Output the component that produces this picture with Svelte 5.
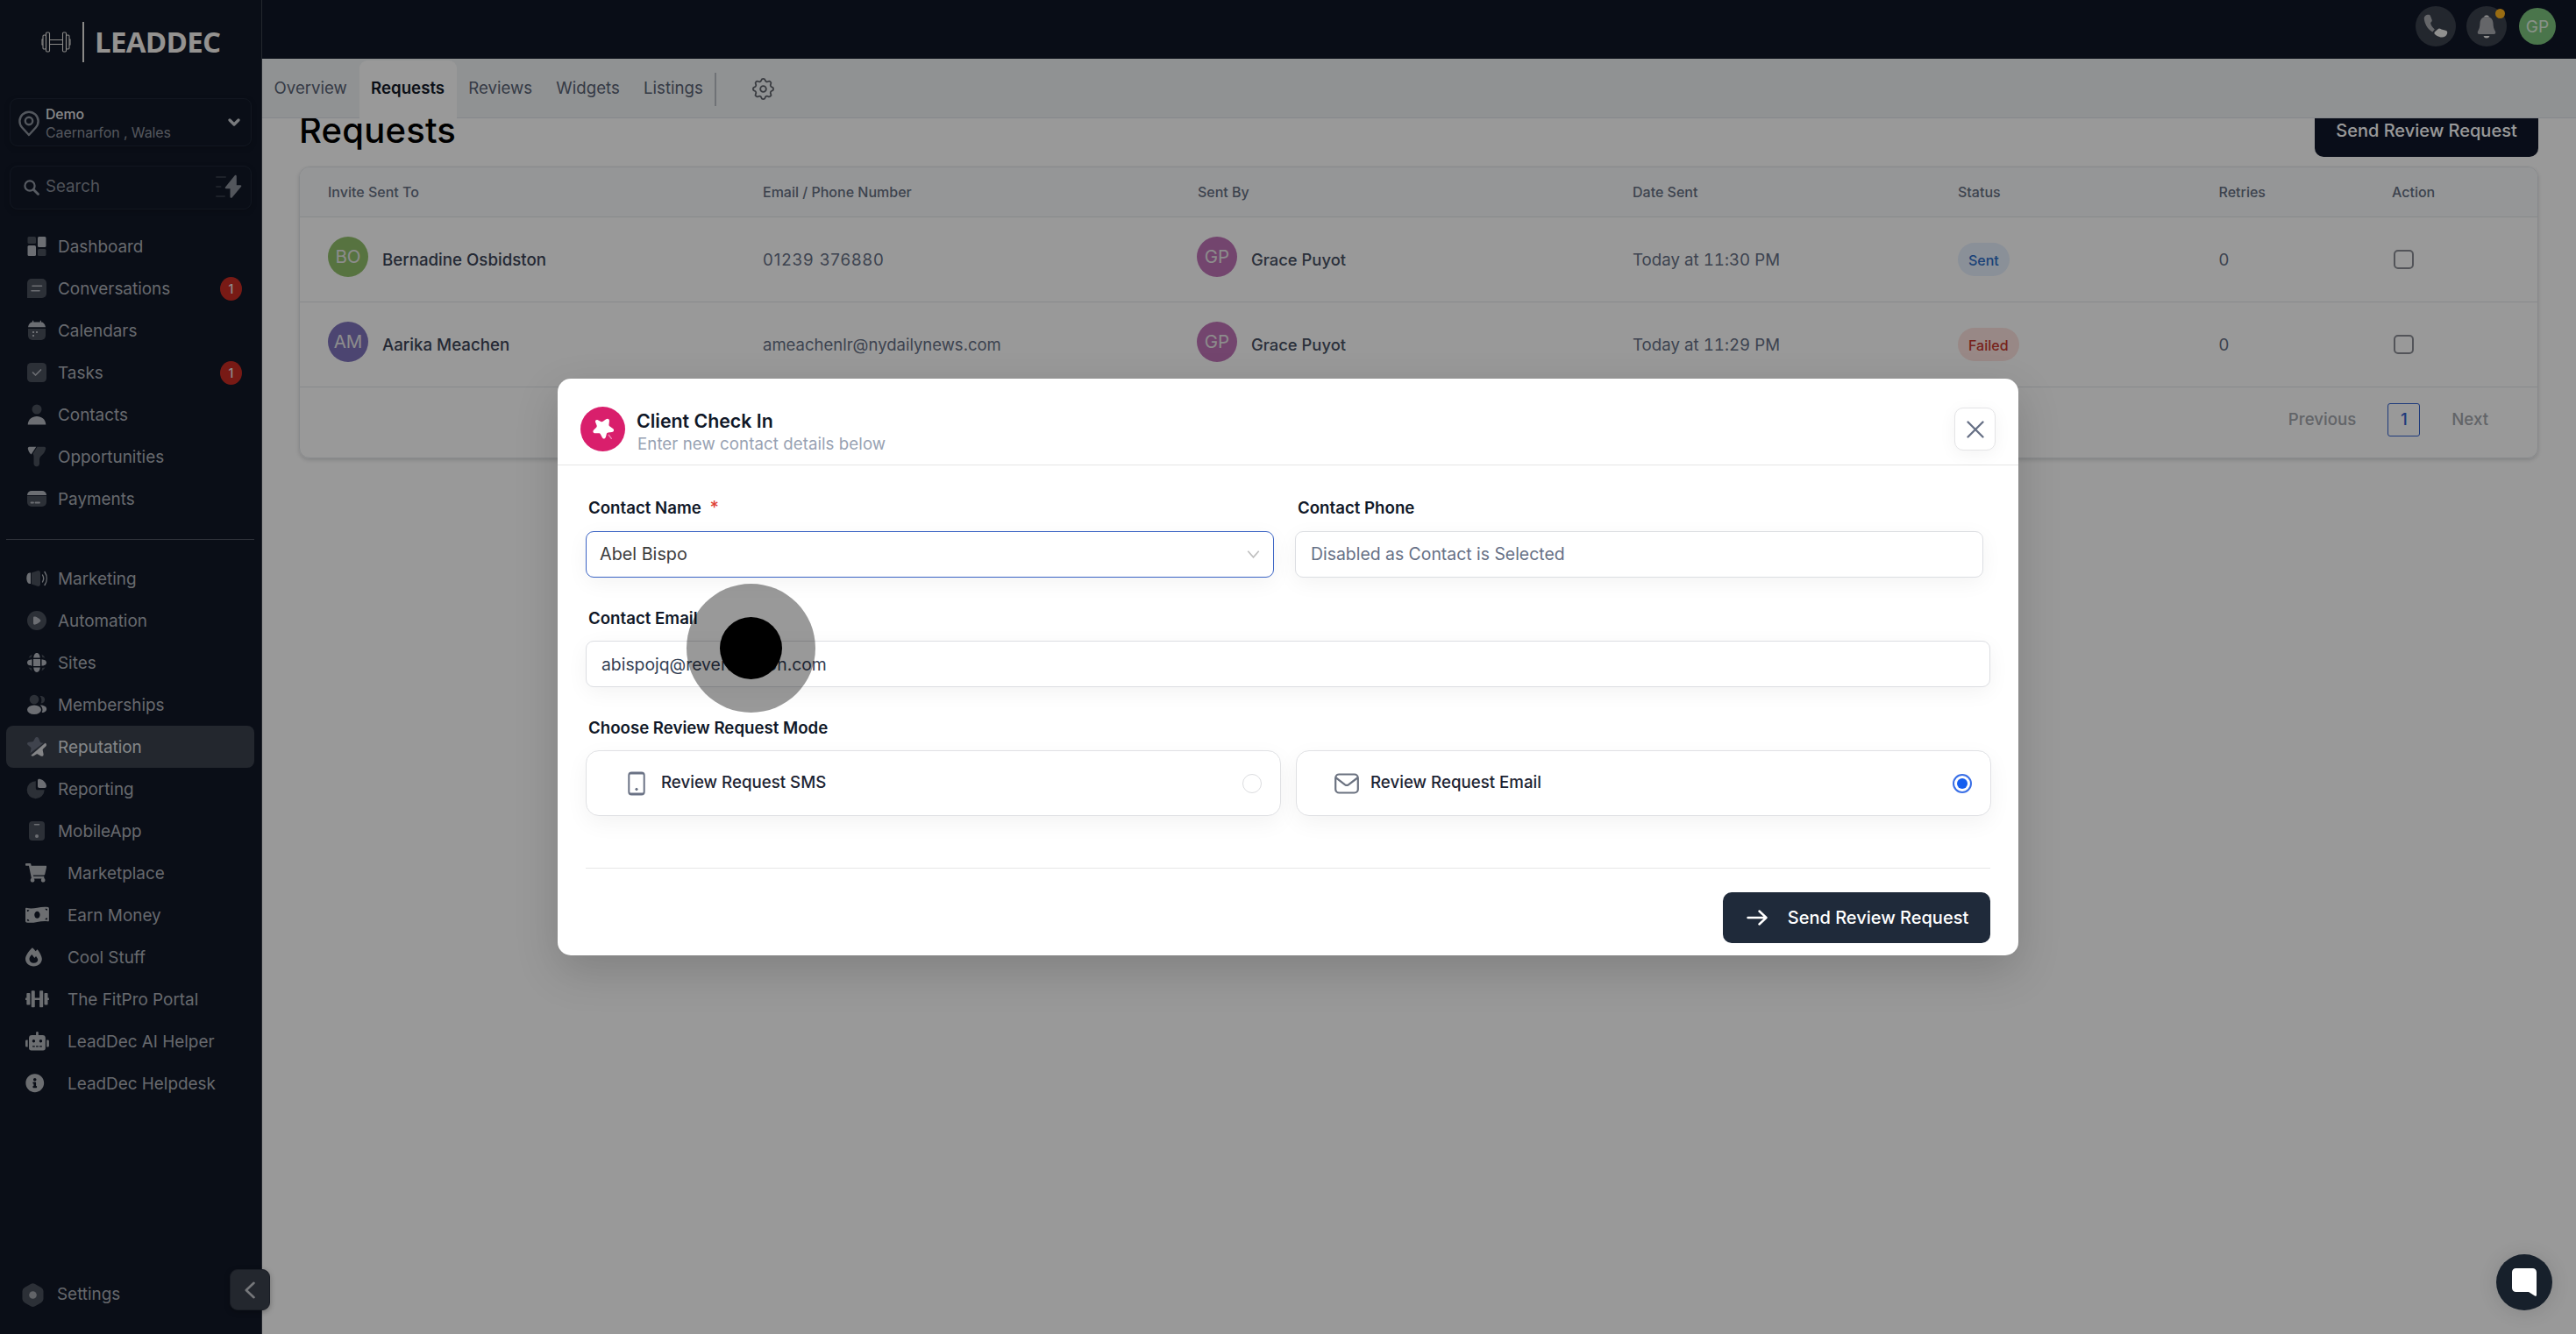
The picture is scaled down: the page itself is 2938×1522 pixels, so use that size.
<script>
  const dim = '#4a505c';
  const lit = '#b4b8c0';

  // Two-tone glyphs on a 24 unit grid.
  const icons = {
    dashboard: `<rect x="1.5" y="1" width="9.5" height="8" rx="1.5" fill="${dim}"/><rect x="13" y="1" width="9.5" height="12" rx="1.5" fill="${lit}"/><rect x="1.5" y="11" width="9.5" height="12" rx="1.5" fill="${lit}"/><rect x="13" y="15" width="9.5" height="8" rx="1.5" fill="${dim}"/>`,
    conversations: `<path d="M1 23V6a5 5 0 0 1 5-5h12a5 5 0 0 1 5 5v12a5 5 0 0 1-5 5z" fill="${dim}"/><path d="M7 9.3h10.500M6 14.700h9" stroke="${lit}" stroke-width="1.600" stroke-linecap="round"/>`,
    calendars: `<path d="M2 10h20v8a5 5 0 0 1-5 5H7a5 5 0 0 1-5-5z" fill="${dim}"/><path d="M2 8.200C2.500 4.500 5 2.600 7 2.600V.8h1.200v1.800h7.600V.8H17v1.800c2 0 4.500 1.900 5 5.600z" fill="${lit}"/><path d="M7 14h2M11 14h2M7 18h2" stroke="${lit}" stroke-width="1.800"/>`,
    tasks: `<rect x="1" y="1" width="22" height="22" rx="4.500" fill="${dim}"/><path d="m7.500 12 3 3 6-6" fill="none" stroke="${lit}" stroke-width="1.700" stroke-linecap="round" stroke-linejoin="round"/>`,
    contacts: `<circle cx="12" cy="6" r="5.500" fill="${dim}"/><path d="M1.700 23.500C2 17.500 6.500 14 12 14s10 3.500 10.300 9.500z" fill="${lit}"/>`,
    opportunities: `<path d="M12.500.8h8a1.800 1.800 0 0 1 1.500 2.700c-.8 3.500-2.500 5.500-4.600 7.200-1.700 1.300-2.400 2.800-2.400 4.800v4.500c0 2-1.300 3.200-3.200 3.200S8.500 22 8.500 20V12c0-1.500-.3-2.300-1-3.200z" fill="${dim}"/><path d="M11.300.8H3.600A1.800 1.800 0 0 0 2 3.500c.5 2.300 1.600 4.500 3.600 6z" fill="${lit}"/>`,
    payments: `<path d="M1 9h22v7a5 5 0 0 1-5 5H6a5 5 0 0 1-5-5z" fill="${dim}"/><path d="M1 8a5 5 0 0 1 5-5h12a5 5 0 0 1 5 5z" fill="${lit}"/><path d="M5.500 16.500h2.500M10.500 16.500h4.500" stroke="${lit}" stroke-width="1.800" stroke-linecap="round"/>`,
    marketing: `<path d="M5 5.500H3.800C1.500 5.500.3 8.500.3 11.500s1.200 6.500 3.500 6.500H5z" fill="${lit}"/><path d="M6 5.500 13.500 3c1.600 0 2.500 1 2.500 2.500v13c0 1.500-1 2.500-2.500 2.500L6 18.500z" fill="${dim}"/><path d="M18.500 8c1.500 2.500 1.500 5.500 0 8M21 4.500c3 4.500 3 10.500 0 15" fill="none" stroke="${lit}" stroke-width="1.400" stroke-linecap="round"/>`,
    automation: `<circle cx="12" cy="12" r="11" fill="${dim}"/><path d="M8 9c0-1.500 1-1.800 2.200-1.400 2 .7 4 1.900 5.600 3.400.8.700.8 1.500 0 2.200-1.600 1.500-3.600 2.700-5.600 3.300-1.200.4-2.200 0-2.200-1.400z" fill="${lit}"/>`,
    sites: `<rect x="8" y="8" width="8" height="8" fill="${lit}"/><path d="M8.200 6.500C8.600 3.500 9.500 1 12 1s3.400 2.500 3.800 5.500zM8.200 17.500c.4 3 1.300 5.500 3.800 5.500s3.400-2.500 3.800-5.500zM6.500 8.200C3.500 8.600 1 9.500 1 12s2.500 3.400 5.500 3.800zM17.500 8.200c3 .4 5.500 1.300 5.500 3.800s-2.500 3.400-5.500 3.800z" fill="${lit}"/><path d="M6.500 2.500 5.800 6 2.500 6.500A10.500 10.500 0 0 1 6.500 2.500zM17.500 2.500l.7 3.500 3.300.5a10.500 10.500 0 0 0-4-4zM6.500 21.500 5.800 18l-3.300-.5a10.500 10.500 0 0 0 4 4zM17.500 21.500l.7-3.500 3.300-.5a10.500 10.500 0 0 1-4 4z" fill="${dim}"/>`,
    memberships: `<circle cx="9" cy="6" r="5.300" fill="${dim}"/><path d="M15.500 2c4 0 5.600 1.800 5.600 4.200s-1.600 4.300-4.600 4.300c1.500-3 1-6.500-1-8.500z" fill="${dim}"/><ellipse cx="9" cy="17.800" rx="8" ry="5.200" fill="${lit}"/><path d="M15.500 12.500c4.500 0 7.700 1.800 7.700 4.300s-2.500 4.400-5.500 4.200c1.500-3 .8-6.500-2.200-8.500z" fill="${lit}"/>`,
    reputation: `<path d="M10 2.200c.8-1.700 3.200-1.700 4 0l1.800 4.300c.2.500.6.8 1.100.9l2.600.3L4.500 19.300l1-5.300c.1-.5 0-.9-.4-1.200L1.600 9.700C.4 8.500 1.100 6.900 2.700 6.700l4.400-.5c.5 0 .9-.3 1.100-.8z" fill="#6a7180"/><path d="M21.500 7.800c1.600.4 2 2.600.8 3.800l-3.200 3c-.4.400-.5.800-.4 1.300l.9 4.300c.4 2-1.400 3.300-3.100 2.300l-3.400-2c-.6-.3-1.100-.3-1.600 0l-2.900 1.800c-1.200.7-2.600.5-3.200-.6z" fill="#dcdee1"/>`,
    reporting: `<path d="M10.800 3.200V11c0 1.500.8 2.300 2.300 2.300h7.600A10 10 0 1 1 10.800 3.200z" fill="${dim}"/><path d="M13 2.500C13 1 14 .5 15.300.8c3.900.8 6.800 3.700 7.600 7.500.3 1.500-.4 2.700-1.900 2.700h-6c-1.300 0-2-.7-2-2z" fill="${lit}"/>`,
    mobile: `<rect x="3" y="1" width="18" height="22" rx="4" fill="${dim}"/><path d="M9.500 4.800h5" stroke="${lit}" stroke-width="1.500" stroke-linecap="round"/><circle cx="12" cy="18" r="2" fill="${lit}"/>`
  };

  const upper = [
    { label: 'Dashboard', icon: 'dashboard' },
    { label: 'Conversations', icon: 'conversations', count: 1 },
    { label: 'Calendars', icon: 'calendars' },
    { label: 'Tasks', icon: 'tasks', count: 1 },
    { label: 'Contacts', icon: 'contacts' },
    { label: 'Opportunities', icon: 'opportunities' },
    { label: 'Payments', icon: 'payments' }
  ];
  const lower = [
    { label: 'Marketing', icon: 'marketing' },
    { label: 'Automation', icon: 'automation' },
    { label: 'Sites', icon: 'sites' },
    { label: 'Memberships', icon: 'memberships' },
    { label: 'Reputation', icon: 'reputation', active: true },
    { label: 'Reporting', icon: 'reporting' },
    { label: 'MobileApp', icon: 'mobile' }
  ];
  const custom = [
    { label: 'Marketplace', w: 576, d: 'M528.12 301.319l47.273-208C578.806 78.301 567.391 64 551.99 64H159.208l-9.166-44.81C147.758 8.021 137.93 0 126.529 0H24C10.745 0 0 10.745 0 24v16c0 13.255 10.745 24 24 24h69.883l70.248 343.435C147.325 417.1 136 435.222 136 456c0 30.928 25.072 56 56 56s56-25.072 56-56c0-15.674-6.447-29.835-16.824-40h209.647C430.447 426.165 424 440.326 424 456c0 30.928 25.072 56 56 56s56-25.072 56-56c0-22.172-12.888-41.332-31.579-50.405l5.517-24.276c3.413-15.018-8.002-29.319-23.403-29.319H218.117l-6.545-32h293.145c11.206 0 20.92-7.754 23.403-18.681z' },
    { label: 'Earn Money', w: 640, d: 'M26 66C120 96 220 84 320 66S520 32 616 50c16 4 24 16 24 32v328c0 20-12 30-30 26-90-18-190-4-290 14S110 484 24 462C8 458 0 446 0 430V88c0-18 10-27 26-22zM320 158c-42 0-76 44-76 98s34 98 76 98 76-44 76-98-34-98-76-98zM46 118v50c30 0 54-18 56-42-19 0-37-3-56-8zM594 96c-20-4-38-6-58-6 2 26 26 46 58 46zM594 388v-48c-32 0-58 20-60 46 22-2 40-1 60 2zM46 416c20 5 38 7 58 7-2-26-26-47-58-47z' },
    { label: 'Cool Stuff', w: 448, d: 'M323 52c-17 15-32 32-46 50C256 73 224 38 190 5 78 104 0 232 0 312c0 112 97 200 224 200s224-88 224-200c0-60-52-185-125-260zM225 425c-70 0-118-45-118-108 0-44 22-72 66-125 7 8 72 92 72 92l42-48c30 38 52 70 52 100 0 52-48 89-114 89z' },
    { label: 'The FitPro Portal', w: 640, d: 'M104 96H56c-13.3 0-24 10.7-24 24v104H8c-4.400 0-8 3.600-8 8v48c0 4.400 3.600 8 8 8h24v104c0 13.300 10.700 24 24 24h48c13.300 0 24-10.700 24-24V120c0-13.300-10.700-24-24-24zm528 128h-24V120c0-13.300-10.700-24-24-24h-48c-13.300 0-24 10.700-24 24v272c0 13.300 10.700 24 24 24h48c13.300 0 24-10.700 24-24V288h24c4.400 0 8-3.600 8-8v-48c0-4.400-3.600-8-8-8zM456 32h-48c-13.300 0-24 10.700-24 24v168H256V56c0-13.300-10.700-24-24-24h-48c-13.300 0-24 10.700-24 24v400c0 13.300 10.700 24 24 24h48c13.300 0 24-10.700 24-24V288h128v168c0 13.300 10.700 24 24 24h48c13.300 0 24-10.700 24-24V56c0-13.300-10.700-24-24-24z' },
    { label: 'LeadDec AI Helper', w: 640, d: 'M32,224H64V416H32A31.96166,31.96166,0,0,1,0,384V256A31.96166,31.96166,0,0,1,32,224Zm512-48V448a64.06328,64.06328,0,0,1-64,64H160a64.06328,64.06328,0,0,1-64-64V176a79.974,79.974,0,0,1,80-80H288V32a32,32,0,0,1,64,0V96H464A79.974,79.974,0,0,1,544,176ZM264,256a40,40,0,1,0-40,40A39.997,39.997,0,0,0,264,256Zm-8,128H192v32h64Zm96,0H288v32h64ZM456,256a40,40,0,1,0-40,40A39.997,39.997,0,0,0,456,256Zm-8,128H384v32h64ZM640,256V384a31.96166,31.96166,0,0,1-32,32H576V224h32A31.96166,31.96166,0,0,1,640,256Z' },
    { label: 'LeadDec Helpdesk', w: 512, d: 'M256 8C119.043 8 8 119.083 8 256c0 136.997 111.043 248 248 248s248-111.003 248-248C504 119.083 392.957 8 256 8zm0 110c23.196 0 42 18.804 42 42s-18.804 42-42 42-42-18.804-42-42 18.804-42 42-42zm56 254c0 6.627-5.373 12-12 12h-88c-6.627 0-12-5.373-12-12v-24c0-6.627 5.373-12 12-12h12v-64h-12c-6.627 0-12-5.373-12-12v-24c0-6.627 5.373-12 12-12h64c6.627 0 12 5.373 12 12v100h12c6.627 0 12 5.373 12 12v24z' }
  ];

  const tabs = ['Overview', 'Requests', 'Reviews', 'Widgets', 'Listings'];
  const columns = ['Invite Sent To', 'Email / Phone Number', 'Sent By', 'Date Sent', 'Status', 'Retries', 'Action'];
  const requests = [
    { initials: 'BO', tone: 'green', name: 'Bernadine Osbidston', contact: '01239 376880', date: 'Today at 11:30 PM', status: 'Sent' },
    { initials: 'AM', tone: 'indigo', name: 'Aarika Meachen', contact: 'ameachenlr@nydailynews.com', date: 'Today at 11:29 PM', status: 'Failed' }
  ];
</script>

{#snippet navItem(item)}
  <a class="nav-item" class:active={item.active} href="#{item.icon}">
    <svg class="glyph" viewBox="0 0 24 24">{@html icons[item.icon]}</svg>
    <span>{item.label}</span>
    {#if item.count}<b class="count">{item.count}</b>{/if}
  </a>
{/snippet}

<div class="app">
  <aside>
    <div class="brand">
      <svg class="brand-mark" viewBox="0 0 34 24" fill="none" stroke="#e6e4e1" stroke-width="1.100">
        <path d="M9.500 9.500h15M9.500 14.500h15" />
        <rect x="5.500" y="1" width="4" height="22" rx="1.200" /><rect x="24.500" y="1" width="4" height="22" rx="1.200" />
        <rect x="2" y="4" width="3.500" height="16" rx="1.200" /><rect x="28.500" y="4" width="3.500" height="16" rx="1.200" />
        <path d="M2 9H1v6h1M32 9h1v6h-1" />
      </svg>
      <i></i>
      <span>LEADDEC</span>
    </div>

    <div class="location">
      <svg class="pin" viewBox="0 0 24 30" fill="none" stroke="#8b919c" stroke-width="2.400"><path d="M12 28 4.200 19.500a10.600 10.600 0 1 1 15.600 0z" stroke-linejoin="round" /><circle cx="12" cy="12" r="4.200" /></svg>
      <div class="location-text"><b>Demo</b><span>Caernarfon , Wales</span></div>
      <svg class="caret" viewBox="0 0 14 9" fill="none" stroke="#c9ccd1" stroke-width="3.200" stroke-linecap="round" stroke-linejoin="round"><path d="m2 2 5 5 5-5" /></svg>
    </div>

    <div class="search">
      <svg class="lens" viewBox="0 0 18 18" fill="none" stroke="#9298a3" stroke-width="2.200" stroke-linecap="round"><circle cx="7" cy="7" r="5.600" /><path d="m11.200 11.200 5.300 5.300" stroke-width="2.800" /></svg>
      <span>Search</span>
      <svg class="bolt" viewBox="0 0 30 28"><path d="M1 3h10M1 14h4.500M1 25h9" stroke="#313845" stroke-width="2" stroke-linecap="round" /><path d="M21.500 1.500 11 14.500c-.6.900-.2 1.700.8 1.700h4.700v9c0 1.700 1.400 2.100 2.300 1L29 14c.7-.9.300-1.800-.8-1.800h-4.400V2.300c0-1.500-1.400-2-2.300-.8z" fill="#8a8f9a" /></svg>
    </div>

    <nav>
      {#each upper as item}{@render navItem(item)}{/each}
      <hr />
      {#each lower as item}{@render navItem(item)}{/each}
      {#each custom as item}
        <a class="nav-item custom" href="#custom">
          <svg class="fa" viewBox="0 0 {item.w} 512" style:aspect-ratio="{item.w} / 512"><path d={item.d} fill="#b4b7bd" fill-rule="evenodd" /></svg>
          <span>{item.label}</span>
        </a>
      {/each}
    </nav>

    <a class="settings" href="#settings">
      <svg viewBox="0 0 25 27"><path d="M10 .9a5 5 0 0 1 5 0l7 4A5 5 0 0 1 24.500 9v9a5 5 0 0 1-2.500 4.200l-7 4a5 5 0 0 1-5 0l-7-4A5 5 0 0 1 .5 18V9A5 5 0 0 1 3 4.900z" fill={dim} /><circle cx="12.500" cy="13.500" r="4.300" fill="#a3a7ae" /></svg>
      <span>Settings</span>
    </a>
  </aside>

  <main>
    <header>
      <div class="round">
        <svg width="28" height="28" viewBox="0 0 28 28"><path d="M.8 5C.6 2.500 3.500.3 6.500.8c1 .2 1.300 1 1.700 2l1.500 4c.5 1.400-.6 2.300-1.600 3.200.4 3 2.200 5.300 4.700 7.600L10.300 20.500C4.500 17 1.200 11 .8 5z" fill="#a9abb0" /><path d="m12.500 20.800 4-3.600c1.500-1.300 2.600-.2 4 .3l4.800 1.300c2 .7 2.300 1.900 1.700 3.700-1 3.500-4 4.300-7.500 3.900-2.800-.5-5-1.800-7-3.900z" fill="#f1f0ee" /></svg>
      </div>
      <div class="round bell">
        <svg width="22" height="27" viewBox="0 0 22 27"><path d="M8 2.500C8.500 1 9.500.5 11 .5s2.500.5 3 2zM7.500 24h7c-.6 1.700-1.800 2.500-3.500 2.500S8.100 25.700 7.500 24z" fill="#f1f0ee" /><path d="M11 2c4.800 0 7.300 3 7.500 7.500.1 4 .8 6.500 2.500 9.500.7 1.500 0 3-1.700 3H2.700C1 22 .3 20.500 1 19c1.700-3 2.400-5.500 2.500-9.500C3.700 5 6.200 2 11 2z" fill="#a9abb0" /></svg>
        <i></i>
      </div>
      <div class="me">GP</div>
    </header>

    <div class="tabs">
      {#each tabs as tab}<a href="#{tab}" class:current={tab === 'Requests'}>{tab}</a>{/each}
      <i></i>
      <svg class="cog" viewBox="0 0 24 24" fill="none" stroke="#60646c" stroke-width="1.400" stroke-linejoin="round"><path d="M10.325 4.317c.426-1.756 2.924-1.756 3.350 0a1.724 1.724 0 002.573 1.066c1.543-.94 3.310.826 2.370 2.370a1.724 1.724 0 001.065 2.572c1.756.426 1.756 2.924 0 3.350a1.724 1.724 0 00-1.066 2.573c.94 1.543-.826 3.310-2.370 2.370a1.724 1.724 0 00-2.572 1.065c-.426 1.756-2.924 1.756-3.350 0a1.724 1.724 0 00-2.573-1.066c-1.543.94-3.310-.826-2.370-2.370a1.724 1.724 0 00-1.065-2.572c-1.756-.426-1.756-2.924 0-3.350a1.724 1.724 0 001.066-2.573c-.94-1.543.826-3.310 2.370-2.370.996.608 2.296.070 2.572-1.065z" /><circle cx="12" cy="12" r="2.600" /></svg>
    </div>

    <div class="content">
      <div class="title-row">
        <h1>Requests</h1>
        <button class="send-top">Send Review Request</button>
      </div>

      <section class="table">
        <div class="row head">{#each columns as c}<div>{c}</div>{/each}</div>
        {#each requests as r}
          <div class="row">
            <div class="person strong"><em class={r.tone}>{r.initials}</em><span>{r.name}</span></div>
            <div class="contact" class:digits={r.status === 'Sent'}>{r.contact}</div>
            <div class="person"><em class="plum">GP</em><span>Grace Puyot</span></div>
            <div class="date">{r.date}</div>
            <div><mark class:failed={r.status === 'Failed'}>{r.status}</mark></div>
            <div>0</div>
            <div><i class="check"></i></div>
          </div>
        {/each}
        <div class="pager"><span>Previous</span><b>1</b><span>Next</span></div>
      </section>
    </div>
  </main>

  <button class="collapse" aria-label="Collapse"><svg viewBox="0 0 12 20" fill="none" stroke="#c3c6cc" stroke-width="2.600" stroke-linecap="round" stroke-linejoin="round"><path d="M10.500 1.800 1.800 10l8.700 8.200" /></svg></button>

  <div class="backdrop"></div>

  <div class="modal">
    <div class="modal-head">
      <div class="badge"><svg viewBox="0 0 28 28"><path d="M12.200 3.200c.6-2 2.700-2.200 3.700-.4l1.500 3.400c.4.900 1 1.300 1.900 1.300l4.200.2c2.300.2 3.100 2.300 1.500 3.900l-2.600 2.600c-.7.700-.8 1.400-.5 2.300l1.200 4c.5 2.200-1.300 3.400-3.200 2.400l-3.500-2.200c-.8-.5-1.500-.5-2.300 0l-3 2.300c-1.800 1.200-3.700.1-3.300-2l.7-4c.2-.9 0-1.600-.8-2.200L4.600 12.600C2.800 11 3.400 9 5.600 8.600l3.800-.4c1-.1 1.500-.6 1.800-1.500z" fill="#fff" transform="rotate(-38 14 14)" /><path d="m20.500 20.500 3 4" stroke="#ee8bb5" stroke-width="1.300" stroke-linecap="round" /></svg></div>
      <div class="heading"><h2>Client Check In</h2><p>Enter new contact details below</p></div>
      <button class="close" aria-label="Close"><svg viewBox="0 0 20 20" stroke="#667085" stroke-width="2.300" stroke-linecap="round"><path d="m1.500 1.500 17 17m0-17-17 17" /></svg></button>
    </div>

    <div class="modal-body">
      <div class="labels"><label for="n">Contact Name <sup>*</sup></label><label for="p">Contact Phone</label></div>
      <div class="pair">
        <div class="field focus" id="n"><span>Abel Bispo</span><svg viewBox="0 0 14 9" fill="none" stroke="#bfbfbf" stroke-width="1.700"><path d="m.8.800 6.200 7 6.200-7" /></svg></div>
        <div class="field phone" id="p"><span>Disabled as Contact is Selected</span></div>
      </div>
      <div class="label-line email-label">Contact Email</div>
      <div class="field email"><span>abispojq@reverbnation.com</span></div>
      <div class="label-line">Choose Review Request Mode</div>
      <div class="modes">
        <div class="mode">
          <svg width="20" height="28" viewBox="0 0 20 28" fill="none" stroke="#6b7385" stroke-width="2"><rect x="1.300" y="1.500" width="17.400" height="25" rx="3" /><path d="M2 2.500h16M2 25.500h16" /><circle cx="10" cy="20.500" r="1.200" fill="#6b7385" stroke-width="1" /></svg>
          <span>Review Request SMS</span><i class="radio"></i>
        </div>
        <div class="mode mail">
          <svg width="28" height="24" viewBox="0 0 28 24" fill="none" stroke="#6b7280" stroke-width="2.200" stroke-linejoin="round"><rect x="1.200" y="1.500" width="25.600" height="21" rx="4" /><path d="m1.800 5.500 10.300 7.800q1.900 1.300 3.800 0L26.200 5.500" /></svg>
          <span>Review Request Email</span><i class="radio on"></i>
        </div>
      </div>
      <div class="modal-foot">
        <button class="send"><svg viewBox="0 0 24 18" fill="none" stroke="#fff" stroke-width="2.400" stroke-linecap="round" stroke-linejoin="round"><path d="M1.500 9h21M14.500 1.500 22.500 9l-8 7.500" /></svg><span>Send Review Request</span></button>
      </div>
    </div>
  </div>

  <div class="cursor"><i></i></div>

  <div class="chat"><svg viewBox="0 0 28 32"><path d="M4.500 0h19A4.500 4.500 0 0 1 28 4.500v26c0 1.200-1 1.600-2 1L19 27H4.500A4.500 4.500 0 0 1 0 22.500v-18A4.500 4.500 0 0 1 4.500 0z" fill="#fff" /></svg></div>
</div>

<style>
  :global(body) { background: #fff; }
  * { box-sizing: border-box; }
  .app { position: relative; display: grid; grid-template-columns: 299px 1fr; width: 2938px; height: 1522px; overflow: hidden; background: #fff; font-family: Inter, "Liberation Sans", sans-serif; font-size: 18.67px; color: #667085; }
  a { color: inherit; text-decoration: none; }
  button { font: inherit; border: 0; padding: 0; display: flex; align-items: center; justify-content: center; }
  svg { display: block; flex: none; }
  h1, h2, p { margin: 0; }
  i, em { font-style: normal; }

  aside { display: flex; flex-direction: column; height: 1522px; background: #111827; border-right: 1px solid #3b414d; }
  .brand { display: flex; align-items: center; height: 96px; padding-left: 47px; }
  .brand-mark { width: 34px; height: 24px; }
  .brand i { width: 2px; height: 46px; margin-left: 13px; background: #e6e4e1; }
  .brand span { margin-left: 12px; font: 700 33px/46px "Open Sans", sans-serif; letter-spacing: -0.7px; color: #f7f4f1; }
  .location, .search { display: flex; align-items: center; width: 276px; margin-left: 11px; border: 1px solid #1e2636; border-radius: 9px; box-shadow: 0 2px 6px rgba(0, 0, 0, 0.2); }
  .location { height: 55px; margin-top: 16px; padding: 0 12px 0 9px; }
  .pin { width: 24px; height: 30px; margin-top: 2px; }
  .location-text { flex: 1; margin: 3px 0 0 7px; font-size: 16px; line-height: 20px; letter-spacing: -0.1px; color: #8d929c; }
  .location-text b { display: block; font-weight: 500; font-size: 15.8px; color: #e3e4e6; }
  .location-text span { display: block; }
  .caret { width: 14px; height: 9px; margin-bottom: 1px; }
  .search { height: 50px; margin-top: 22px; padding: 0 10px 0 15px; font-size: 18.67px; color: #868b96; }
  .lens { width: 18px; height: 18px; }
  .search span { flex: 1; margin: 0 0 3px 7px; }
  .bolt { width: 30px; height: 28px; margin-bottom: 3px; }
  nav { margin-top: 18px; display: flex; flex-direction: column; }
  .nav-item { display: flex; align-items: center; height: 48px; margin: 0 8px 0 7px; padding: 0 14px 0 23px; border-radius: 8px; font-size: 18.9px; color: #acb0b8; }
  .nav-item span { margin-left: 12px; }
  .nav-item.active { background: #3b414e; color: #dfe1e4; }
  .glyph { width: 24px; height: 24px; }
  .count { display: grid; place-items: center; width: 25px; height: 27px; margin-left: auto; border-radius: 50%; background: #c92c24; color: #eceaea; font-size: 14px; font-weight: 500; }
  .custom { display: grid; grid-template-columns: 36px 1fr; padding-left: 22px; }
  .fa { height: 21.500px; }
  hr { width: 283px; height: 1px; margin: 22px 0 20px 7px; border: 0; background: #4d535f; }
  .settings { display: flex; align-items: center; gap: 15px; height: 48px; margin-top: auto; margin-bottom: 22px; padding-left: 25px; font-size: 18.9px; color: #a8acb4; }
  .settings svg { width: 25px; height: 27px; margin-top: 2px; }

  main { display: flex; flex-direction: column; min-width: 0; }
  header { display: flex; justify-content: flex-end; height: 67px; padding: 7px 23px 0 0; background: #101727; flex: none; }
  .round { display: grid; place-items: center; width: 46px; height: 46px; margin-right: 12px; border-radius: 50%; background: #3b414e; }
  .round.bell { position: relative; margin-right: 14px; }
  .round.bell i { position: absolute; top: 3px; right: 2px; width: 11px; height: 11px; border-radius: 50%; background: #ffb41e; }
  .me { display: grid; place-items: center; width: 42px; height: 42px; margin-top: 2px; border-radius: 50%; background: #7cc47e; color: #e2f2e2; font-size: 19px; }
  .tabs { position: relative; z-index: 1; display: flex; align-items: center; flex: none; height: 68px; padding-top: 2px; background: #f0f3f6; border-bottom: 1px solid #dfe3e8; color: #596273; }
  .tabs a { display: flex; align-items: center; height: 66px; padding: 0 13.700px 3px 13.500px; font-size: 18.67px; }
  .tabs .current { border-radius: 9px 9px 0 0; background: #fff; color: #111827; font-weight: 600; }
  .tabs i { width: 2px; height: 38px; margin-left: -1px; background: #b9bec5; }
  .cog { width: 31px; height: 31px; margin-left: 38px; }
  .content { padding: 0 43px 0 42px; margin-top: -16px; }
  .title-row { display: flex; justify-content: space-between; height: 60px; }
  h1 { padding-top: 6px; font-size: 40px; line-height: 48px; font-weight: 500; letter-spacing: 0.2px; color: #000; }
  .send-top { width: 255px; height: 60px; border-radius: 10px; background: #0f172a; color: #fff; font-size: 20px; font-weight: 500; }

  .table { margin-top: 11px; height: 333px; border: 1px solid #e3e6ea; border-radius: 12px; box-shadow: 0 2px 4px rgba(16, 24, 40, 0.16); }
  .row { display: grid; grid-template-columns: 496px 496px 496px 371px 297.500px 197.500px 1fr; align-items: center; height: 97px; padding-left: 32px; border-bottom: 1px solid #e3e6ea; }
  .head { height: 57px; border-radius: 11px 11px 0 0; background: #f8fafc; font-size: 16px; font-weight: 500; color: #667083; }
  .person { display: flex; align-items: center; color: #475063; font-weight: 450; font-size: 18.400px; }
  .strong { color: #3c4558; font-weight: 500; font-size: 18.700px; }
  .contact { font-size: 18.500px; }
  em { display: grid; place-items: center; width: 46px; height: 46px; margin: 0 16px 7px -1px; border-radius: 50%; color: #e9e9e9; font-size: 20.500px; font-weight: 400; }
  .strong em { margin-left: 0; }
  .green { background: #92c06c; } .indigo { background: #7f74bd; } .plum { background: #c074b8; }
  .digits { font-size: 18.67px; letter-spacing: 0.95px; }
  .date { letter-spacing: 0.020px; font-variant-numeric: tabular-nums; }
  mark { display: inline-flex; align-items: center; height: 38px; padding: 2px 12px 0; border-radius: 19px; background: #e6f0fe; color: #2e6fc8; font-size: 16px; font-weight: 500; }
  mark.failed { background: #fde3df; color: #c63a30; }
  .check { display: block; width: 23px; height: 22px; margin-left: 2px; border: 2px solid #8a8d94; border-radius: 5px; }
  .pager { display: flex; align-items: center; justify-content: flex-end; height: 73px; padding-right: 56px; font-weight: 500; color: #a3a7ae; }
  .pager b { display: grid; place-items: center; width: 37px; height: 38px; margin: 0 36px; border: 1.500px solid #3563cf; border-radius: 3px; color: #3563cf; font-weight: 500; }

  .collapse { position: absolute; left: 262px; top: 1448px; width: 46px; height: 47px; border-radius: 9px; background: #3b414e; border: 1px solid #2b313e; box-shadow: 0 2px 6px rgba(0, 0, 0, 0.3); }
  .collapse svg { width: 12px; height: 20px; }
  .backdrop { position: absolute; inset: 0; z-index: 2; background: rgba(0, 0, 0, 0.4); }

  .modal { position: absolute; z-index: 3; left: 636px; top: 432px; width: 1666px; height: 658px; border-radius: 15px; background: #fff; box-shadow: 0 18px 50px rgba(0, 0, 0, 0.16); }
  .modal-head { display: flex; align-items: center; height: 99px; padding: 17px 26px 0 26px; border-bottom: 1px solid #e6e6e6; }
  .badge { display: grid; place-items: center; width: 51px; height: 51px; border-radius: 50%; background: #d91f6c; }
  .badge svg { width: 29px; height: 29px; }
  .heading { flex: 1; margin: 8px 0 0 13px; }
  h2 { font-size: 21.330px; line-height: 24px; font-weight: 600; color: #101828; }
  .heading p { line-height: 24px; padding: 3px 0 0 1px; color: #98a2b3; letter-spacing: 0.070px; }
  .close { width: 47px; height: 49px; border: 1px solid #e4e4e6; border-radius: 10px; background: #fff; box-shadow: 0 4px 20px rgba(0, 0, 0, 0.05); }
  .close svg { width: 20px; height: 20px; }
  .modal-body { padding: 37px 32px 0; }
  .labels { display: grid; grid-template-columns: 809px 1fr; padding-left: 3px; height: 24px; line-height: 24px; }
  label, .label-line { font-weight: 600; color: #101828; }
  sup { margin-left: 5px; vertical-align: 0; font-size: 20px; line-height: 0; font-weight: 500; color: #e04438; }
  .pair { display: flex; gap: 24px; margin-top: 14px; }
  .field { display: flex; align-items: center; justify-content: space-between; height: 53px; padding: 0 16px 0 17px; border: 1px solid #dcdee2; border-radius: 9px; background: #fff; box-shadow: 0 6px 24px rgba(0, 0, 0, 0.05); font-size: 19.350px; color: #344054; }
  .field span { padding-bottom: 1px; }
  .focus { width: 785px; padding: 0 15px; border-color: #3a63c4; color: #3c3c3c; font-size: 19.800px; }
  .focus svg { width: 15px; height: 9px; }
  .phone { width: 785px; color: #667085; font-size: 19.400px; }
  .label-line { height: 24px; margin: 35px 0 0 3px; line-height: 24px; }
  .field.email { margin-top: 13px; }
  .email span { padding-bottom: 0; }
  .modes { display: grid; grid-template-columns: 793px 793px; gap: 16.500px; margin-top: 13px; margin-right: -5px; }
  .mode { display: flex; align-items: center; height: 75px; padding: 0 21px 0 47px; border: 1px solid #e0e1e4; border-radius: 15px; background: #fff; box-shadow: 0 8px 26px rgba(0, 0, 0, 0.05); }
  .mode span { flex: 1; margin: 0 0 2px 18px; font-size: 18.700px; font-weight: 500; color: #1d2433; }
  .mode.mail { padding-left: 43px; }
  .mode.mail span { margin-left: 13.500px; }
  .radio { display: grid; place-items: center; width: 22px; height: 22px; border: 1.500px solid #dcdde0; border-radius: 50%; }
  .radio.on { border: 2px solid #3a6fe6; }
  .radio.on::after { content: ""; width: 12px; height: 12px; border-radius: 50%; background: #155eef; }
  .modal-foot { display: flex; justify-content: flex-end; margin-top: 59px; padding-top: 27px; border-top: 1px solid #e6e6e6; }
  .send { width: 305px; height: 58px; border-radius: 10px; background: #1f2a3a; color: #fff; font-size: 20px; font-weight: 500; }
  .send svg { width: 24px; height: 18px; margin-left: 2px; }
  .send span { margin: 0 0 1px 23px; }

  .cursor { position: absolute; z-index: 4; left: 783px; top: 666px; display: grid; place-items: center; width: 147px; height: 147px; border-radius: 50%; background: rgba(0, 0, 0, 0.4); }
  .cursor i { width: 71px; height: 71px; border-radius: 50%; background: #000; }
  .chat { position: absolute; z-index: 4; left: 2847px; top: 1431px; display: grid; place-items: center; width: 64px; height: 64px; border-radius: 50%; background: #17202b; box-shadow: 0 2px 22px rgba(0, 0, 0, 0.12); }
  .chat svg { width: 28px; height: 32px; }
</style>
